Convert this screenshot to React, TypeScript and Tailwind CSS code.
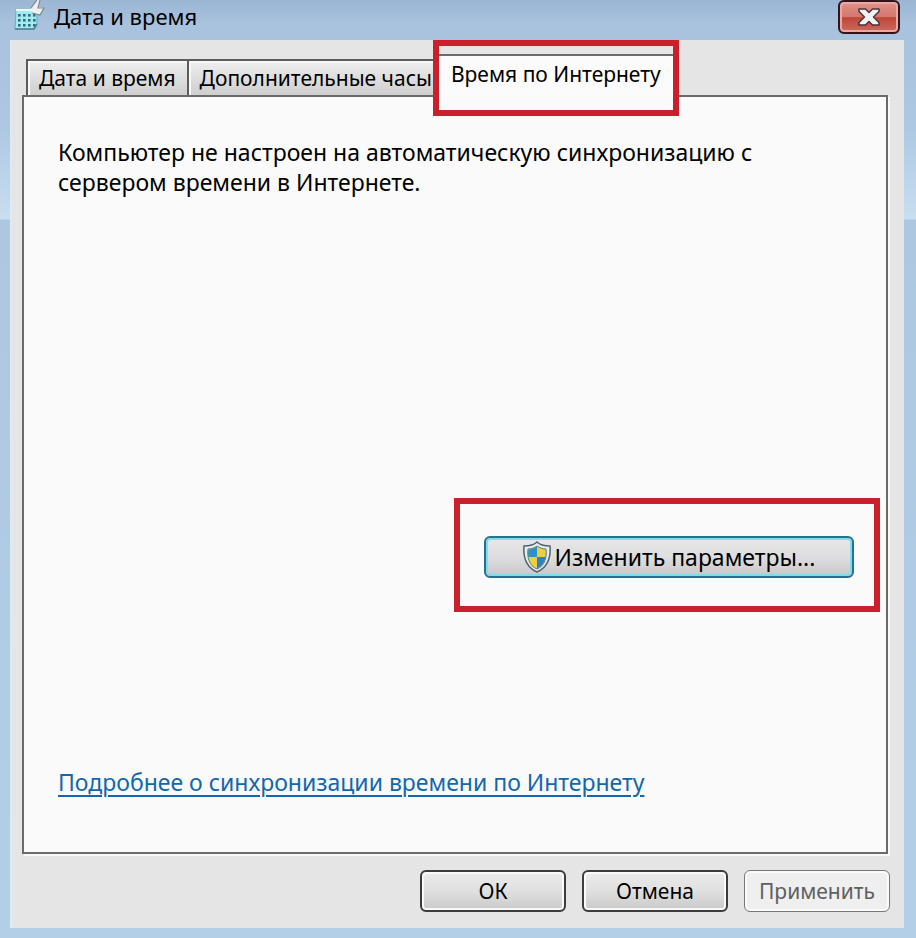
import React, { useState } from 'react';

const TABS = ['Дата и время', 'Дополнительные часы', 'Время по Интернету'];

const DOTS = [14, 19, 24].flatMap((y) => [4, 9, 14, 19].map((x) => ({ x, y })));

const ClockIcon = () => (
  <svg width="32" height="32" viewBox="0 0 32 32" aria-hidden="true">
    <path d="M2 10 H23 V24 L20 29 H1 Z" fill="#a5ebee" stroke="#5fb3c0" strokeWidth="1" />
    <path d="M2 10 H20" stroke="#e4fbfb" strokeWidth="2" />
    {DOTS.map(({ x, y }) => (
      <rect key={`${x}-${y}`} x={x} y={y} width="2.6" height="2.6" fill="#2b6f86" />
    ))}
    <path d="M1 29 H20 L23 24" fill="none" stroke="#4f7f8c" strokeWidth="1.5" />
    <path d="M17 8 L23 0 H26 L25 7 L30 8 L26 15 L18 13 Z" fill="#eceef0" />
    <path d="M17 8 L23 0 M26 0 L24 8 L30 8 L26 15 L18 13" fill="none" stroke="#7d8791" strokeWidth="1.2" />
  </svg>
);

const ShieldIcon = () => (
  <svg width="28" height="32" viewBox="0 0 28 32" aria-hidden="true">
    <path
      d="M14 1 C11 4 6 5 1 5 C0 17 3 26 14 31 C25 26 28 17 27 5 C22 5 17 4 14 1 Z"
      fill="#e9edf0"
      stroke="#4d6470"
      strokeWidth="1.5"
    />
    <path
      d="M14 5 C11 7 8 8 5 8 C4 16 6 25 14 28 C22 25 24 16 23 8 C20 8 17 7 14 5 Z"
      fill="#ecd044"
      stroke="#5c7884"
      strokeWidth="1"
    />
    <path d="M14 5.5 C11 7.5 8 8.5 5.5 8.5 C4.8 11 5 13.5 5.5 16 H14 Z" fill="#2f8fc8" />
    <path d="M22.5 16 H14 V27.5 C19.5 25 21.5 21 22.5 16 Z" fill="#2b84bd" />
  </svg>
);

const CloseIcon = () => (
  <svg width="24" height="20" viewBox="0 0 24 20" aria-hidden="true">
    <path
      d="M2 2 H8.5 L12 5.5 L15.5 2 H22 V4.5 L16.5 10 L22 15.5 V18 H15.5 L12 14.5 L8.5 18 H2 V15.5 L7.5 10 L2 4.5 Z"
      fill="#f2f2f4"
      stroke="#4a3438"
      strokeWidth="1.5"
      strokeLinejoin="round"
    />
  </svg>
);

interface DialogButtonProps {
  children: React.ReactNode;
  disabled?: boolean;
}

const DialogButton: React.FC<DialogButtonProps> = ({ children, disabled }) => (
  <button
    type="button"
    disabled={disabled}
    className="h-[42px] w-[146px] rounded-md border-2 border-[#3c3c3c] bg-linear-to-b from-[#ececec] from-0% via-[#e0e0e0] via-50% to-[#c9c9c9] text-[21px] shadow-[inset_0_0_0_2px_#fafafa] disabled:border disabled:border-[#777] disabled:bg-[#efefef] disabled:bg-none disabled:text-[#606060]"
  >
    {children}
  </button>
);

export default function App() {
  const [active, setActive] = useState(2);

  return (
    <div className="flex min-h-screen flex-col bg-[linear-gradient(to_bottom,#9ab6d4_0,#a9c2de_24px,#adc8e3_130px,#c9dff0_219px,#adc7e1_220px,#b3cfe8_100%)] pr-3 pb-[10px] pl-[10px] font-['Noto_Sans','Open_Sans',sans-serif] text-[22px] leading-[30px] text-black">
      <header className="flex h-10 items-start justify-between pr-1 pl-1">
        <div className="flex items-center gap-2">
          <ClockIcon />
          <h1>Дата и время</h1>
        </div>
        <button
          type="button"
          aria-label="Закрыть"
          className="flex h-[34px] w-[62px] items-center justify-center rounded-md border-2 border-[#35131a] bg-[linear-gradient(to_bottom,#e0928a_0%,#d3776d_50%,#be4638_52%,#cc6a60_100%)] shadow-[inset_0_0_0_2px_#e7aaa5]"
        >
          <CloseIcon />
        </button>
      </header>

      <main className="flex flex-1 flex-col bg-[#e6e5e5] pr-[14px] pb-4 pl-3 shadow-[inset_2px_0_0_#dfeaf4]">
        <div role="tablist" className="flex h-[55px] items-end pl-1">
          {TABS.map((tab, index) => (
            <div key={tab} className={index === 2 ? 'relative z-10 -ml-1' : ''}>
              <button
                type="button"
                role="tab"
                aria-selected={active === index}
                onClick={() => setActive(index)}
                className={
                  active === index
                    ? 'relative z-10 -mb-[2px] flex h-[43px] whitespace-nowrap border-t-2 border-[#6b6b6b] bg-[#fcfbfb] px-3 pt-[3px] text-[21px]'
                    : 'flex h-9 items-center whitespace-nowrap border-t-2 border-l-2 border-[#5c5c5c] bg-linear-to-b from-[#efeeee] to-[#cfcfcf] px-[11px] text-[21px] shadow-[inset_2px_2px_0_#f8f8f8]'
                }
              >
                {tab}
              </button>
              {index === 2 && (
                <div className="pointer-events-none absolute -inset-x-[6px] -top-[14px] -bottom-[21px] z-20 border-[6px] border-[#c9202c]" />
              )}
            </div>
          ))}
        </div>

        <section
          role="tabpanel"
          className="mr-[2px] flex flex-1 flex-col border-2 border-[#6b696a] bg-[#fafafa] pt-10 shadow-[2px_2px_0_#f8f8f8]"
        >
          <p className="max-w-[740px] pl-[34px] text-[23px]">
            Компьютер не настроен на автоматическую синхронизацию с сервером времени в Интернете.
          </p>

          <div className="mt-auto mr-[6px] w-[426px] self-end border-[6px] border-[#c9202c] pt-8 pr-5 pb-7 pl-6">
            <button
              type="button"
              className="flex h-[42px] w-full items-center justify-center gap-1 rounded-md border-2 border-[#28718b] bg-linear-to-b from-[#e8e8e8] from-0% via-[#dedddf] via-50% to-[#c8c8ca] text-[23px] shadow-[inset_0_0_0_2px_#7fdcef]"
            >
              <ShieldIcon />
              Изменить параметры...
            </button>
          </div>

          <div className="mt-[155px] mb-[55px] pl-[34px] text-[23px]">
            <a href="#internet-time" className="text-[#1267ad] underline decoration-2 underline-offset-4">
              Подробнее о синхронизации времени по Интернету
            </a>
          </div>
        </section>

        <footer className="flex justify-end gap-4 pt-4">
          <DialogButton>ОК</DialogButton>
          <DialogButton>Отмена</DialogButton>
          <DialogButton disabled>Применить</DialogButton>
        </footer>
      </main>
    </div>
  );
}
